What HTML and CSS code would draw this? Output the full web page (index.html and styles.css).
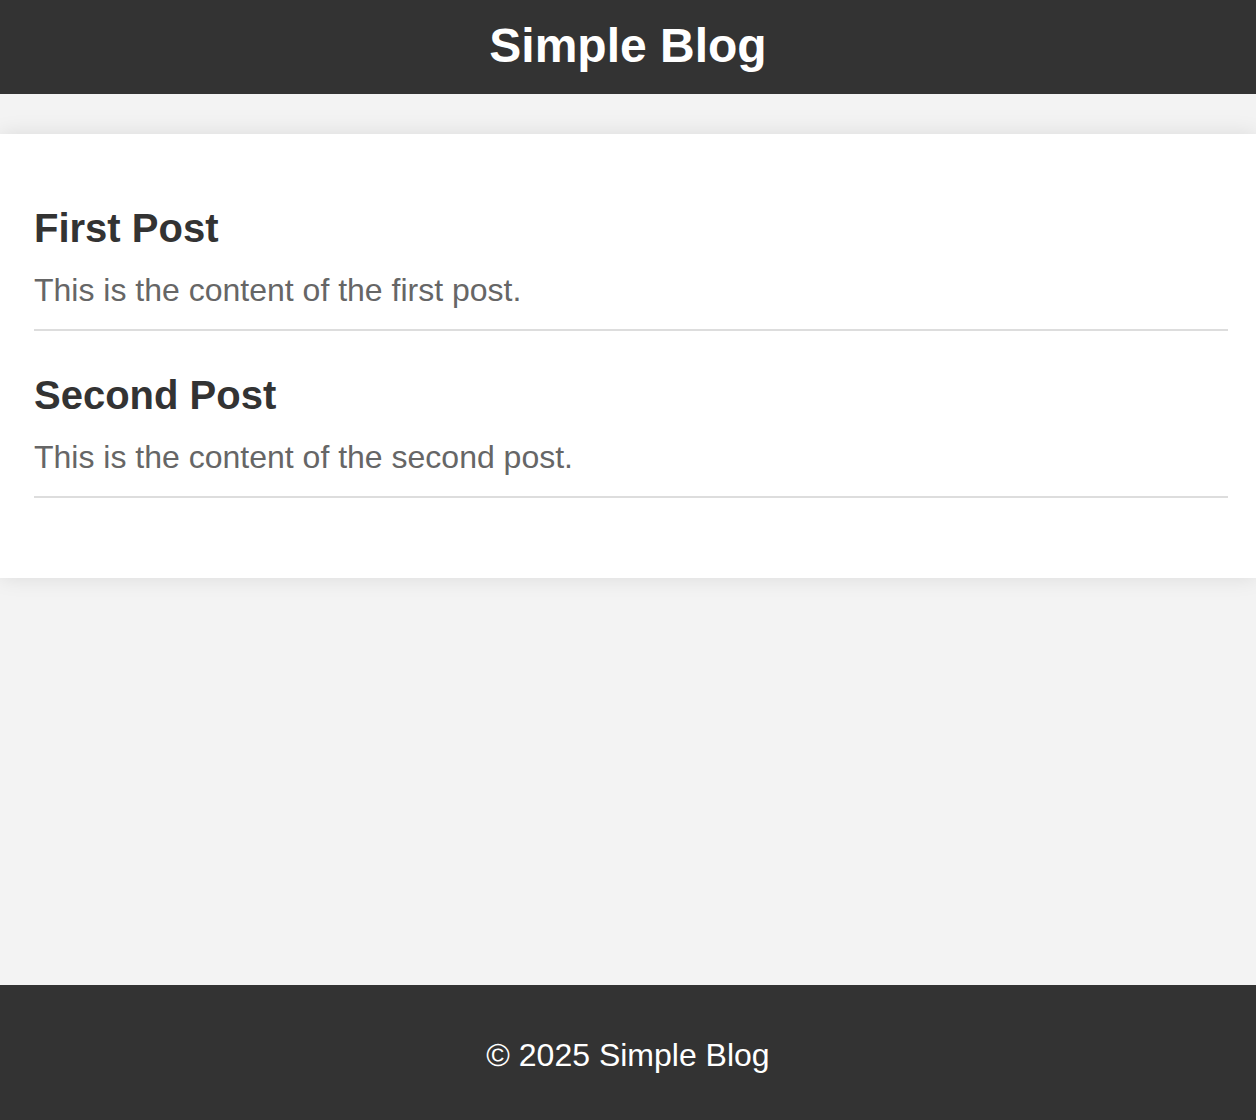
FILE: index.html
```html
<!DOCTYPE html>
<html lang="en">
<head>
<meta charset="utf-8">
<title>Simple Blog</title>
<link rel="stylesheet" href="styles.css">
</head>
<body>
<div class="page">
  <header class="site-header">
    <h1 class="site-title">Simple Blog</h1>
  </header>
  <main class="content">
    <section class="card">
      <article class="post">
        <h2 class="post-title">First Post</h2>
        <p class="post-body">This is the content of the first post.</p>
      </article>
      <article class="post">
        <h2 class="post-title">Second Post</h2>
        <p class="post-body">This is the content of the second post.</p>
      </article>
    </section>
  </main>
  <footer class="site-footer">
    <p class="footer-text">&copy; 2025 Simple Blog</p>
  </footer>
</div>
</body>
</html>
```

FILE: styles.css
```css
* { box-sizing: border-box; }

html, body {
  margin: 0;
  padding: 0;
}

body {
  font-family: "Liberation Sans", Arial, Helvetica, sans-serif;
  background: #f3f3f3;
  color: #333;
}

.page {
  min-height: 100vh;
  display: flex;
  flex-direction: column;
}

.site-header {
  background: #333;
  color: #fff;
  text-align: center;
  padding: 18px 0 21px;
}

.site-title {
  margin: 0;
  font-size: 48px;
  font-weight: bold;
  line-height: normal;
}

.content {
  flex: 1;
  padding-top: 40px;
}

.card {
  background: #fff;
  box-shadow: 0 0 20px rgba(0, 0, 0, 0.1);
  padding: 72px 28px 40px 34px;
  display: flex;
  flex-direction: column;
  gap: 42px;
}

.post {
  border-bottom: 2px solid #ddd;
  padding: 0 0 20px;
}

.post:last-child {
  margin-bottom: 40px;
}

.post-title {
  margin: 0 0 21px;
  font-size: 40px;
  font-weight: bold;
  color: #333;
  line-height: normal;
}

.post-body {
  margin: 0;
  font-size: 32px;
  color: #666;
  line-height: normal;
}

.site-footer {
  background: #333;
  color: #fff;
  text-align: center;
  padding: 20px 0 14px;
}

.footer-text {
  margin: 32px 0;
  font-size: 32px;
  line-height: normal;
}
```
